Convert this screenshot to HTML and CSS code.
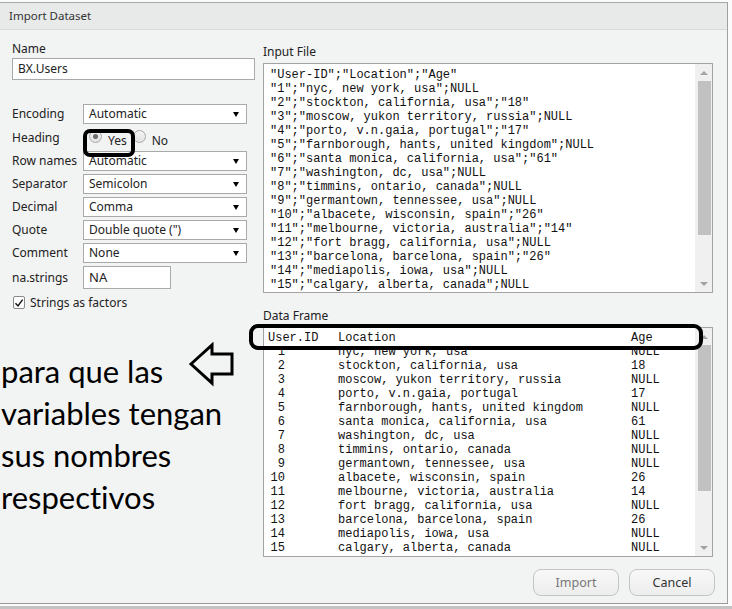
FILE: index.html
```html
<!DOCTYPE html>
<html>
<head>
<meta charset="utf-8">
<link rel="stylesheet" href="styles.css">
</head>
<body>
<div class="screen">
  <div class="dialog">
    <div class="titlebar">Import Dataset</div>
    <div class="content">
      <div class="left">
        <div class="lbl">Name</div>
        <div class="textbox name">BX.Users</div>
        <div class="form">
          <span class="rl">Encoding</span><div class="select">Automatic<i class="caret"></i></div>
          <span class="rl">Heading</span>
          <div class="radios">
            <span class="radio on"></span><span class="rtext">Yes</span>
            <span class="radio"></span><span class="rtext">No</span>
          </div>
          <span class="rl">Row names</span><div class="select">Automatic<i class="caret"></i></div>
          <span class="rl">Separator</span><div class="select">Semicolon<i class="caret"></i></div>
          <span class="rl">Decimal</span><div class="select">Comma<i class="caret"></i></div>
          <span class="rl">Quote</span><div class="select">Double quote (")<i class="caret"></i></div>
          <span class="rl">Comment</span><div class="select">None<i class="caret"></i></div>
          <span class="rl">na.strings</span><div class="textbox na">NA</div>
        </div>
        <div class="check"><span class="cbox"><svg width="10" height="10" viewBox="0 0 10 10"><path d="M1.5 5.2 L4 8 L8.6 1.6" fill="none" stroke="#111" stroke-width="1.4"/></svg></span><span>Strings as factors</span></div>
        <p class="note">para que las<br>variables tengan<br>sus nombres<br>respectivos</p>
      </div>
      <div class="right">
        <div class="lbl">Input File</div>
        <div class="box">
<pre class="pre">"User-ID";"Location";"Age"
"1";"nyc, new york, usa";NULL
"2";"stockton, california, usa";"18"
"3";"moscow, yukon territory, russia";NULL
"4";"porto, v.n.gaia, portugal";"17"
"5";"farnborough, hants, united kingdom";NULL
"6";"santa monica, california, usa";"61"
"7";"washington, dc, usa";NULL
"8";"timmins, ontario, canada";NULL
"9";"germantown, tennessee, usa";NULL
"10";"albacete, wisconsin, spain";"26"
"11";"melbourne, victoria, australia";"14"
"12";"fort bragg, california, usa";NULL
"13";"barcelona, barcelona, spain";"26"
"14";"mediapolis, iowa, usa";NULL
"15";"calgary, alberta, canada";NULL</pre>
          <div class="sb"><span class="arr up"></span><span class="thumb t1"></span><span class="track"></span><span class="arr down"></span></div>
        </div>
        <div class="lbl df-lbl">Data Frame</div>
        <div class="box">
          <div class="table">
            <div class="tr th"><span class="c1">User.ID</span><span class="c2">Location</span><span class="c3">Age</span></div>
            <div class="tr"><span class="c1"><b class="n">1</b></span><span class="c2">nyc, new york, usa</span><span class="c3">NULL</span></div>
            <div class="tr"><span class="c1"><b class="n">2</b></span><span class="c2">stockton, california, usa</span><span class="c3">18</span></div>
            <div class="tr"><span class="c1"><b class="n">3</b></span><span class="c2">moscow, yukon territory, russia</span><span class="c3">NULL</span></div>
            <div class="tr"><span class="c1"><b class="n">4</b></span><span class="c2">porto, v.n.gaia, portugal</span><span class="c3">17</span></div>
            <div class="tr"><span class="c1"><b class="n">5</b></span><span class="c2">farnborough, hants, united kingdom</span><span class="c3">NULL</span></div>
            <div class="tr"><span class="c1"><b class="n">6</b></span><span class="c2">santa monica, california, usa</span><span class="c3">61</span></div>
            <div class="tr"><span class="c1"><b class="n">7</b></span><span class="c2">washington, dc, usa</span><span class="c3">NULL</span></div>
            <div class="tr"><span class="c1"><b class="n">8</b></span><span class="c2">timmins, ontario, canada</span><span class="c3">NULL</span></div>
            <div class="tr"><span class="c1"><b class="n">9</b></span><span class="c2">germantown, tennessee, usa</span><span class="c3">NULL</span></div>
            <div class="tr"><span class="c1"><b class="n">10</b></span><span class="c2">albacete, wisconsin, spain</span><span class="c3">26</span></div>
            <div class="tr"><span class="c1"><b class="n">11</b></span><span class="c2">melbourne, victoria, australia</span><span class="c3">14</span></div>
            <div class="tr"><span class="c1"><b class="n">12</b></span><span class="c2">fort bragg, california, usa</span><span class="c3">NULL</span></div>
            <div class="tr"><span class="c1"><b class="n">13</b></span><span class="c2">barcelona, barcelona, spain</span><span class="c3">26</span></div>
            <div class="tr"><span class="c1"><b class="n">14</b></span><span class="c2">mediapolis, iowa, usa</span><span class="c3">NULL</span></div>
            <div class="tr"><span class="c1"><b class="n">15</b></span><span class="c2">calgary, alberta, canada</span><span class="c3">NULL</span></div>
          </div>
          <div class="sb"><span class="arr up"></span><span class="thumb t2"></span><span class="track"></span><span class="arr down"></span></div>
        </div>
      </div>
    </div>
    <div class="footer">
      <button class="btn disabled">Import</button>
      <button class="btn">Cancel</button>
    </div>
  </div>
  <div class="mark mark-yes"></div>
  <div class="mark mark-df"></div>
  <svg class="arrow" width="50" height="46" viewBox="0 0 50 46"><polygon points="3,22 24,3 24,12 44,12 44,32 24,32 24,41" fill="none" stroke="#000" stroke-width="3" stroke-linejoin="miter"/></svg>
</div>
</body>
</html>
```
FILE: styles.css
```css
* { box-sizing: border-box; }
html, body { margin: 0; padding: 0; }
body { width: 732px; height: 609px; overflow: hidden; background: #fbfbfb; }
.screen {
  position: relative;
  width: 732px;
  height: 609px;
  background: #fbfbfb;
  font-family: "Noto Sans", "Open Sans", sans-serif;
  font-size: 12px;
  color: #222;
}
.screen::after {
  content: "";
  position: absolute;
  left: 0; right: 0; bottom: 0; height: 5px;
  background: #c4c4c4;
}
.dialog {
  margin-top: 2px;
  width: 728px;
  height: 602px;
  background: #f2f3f3;
  border-top: 1px solid #a8a8a8;
  border-right: 1px solid #a0a0a0;
  border-bottom: 1px solid #9a9a9a;
  display: flex;
  flex-direction: column;
}
.titlebar {
  height: 27px;
  background: #e8e9e9;
  border-bottom: 1px solid #d8d9d9;
  padding-left: 9px;
  font-size: 11.5px;
  line-height: 26px;
  color: #333;
}
.content {
  display: grid;
  grid-template-columns: 243px 450px;
  column-gap: 8px;
  padding-left: 12px;
  height: 527px;
}
.left { padding-top: 11px; }
.right { padding-top: 14px; }
.lbl { height: 16px; line-height: 16px; margin-bottom: 1px; }
.right .lbl { margin-bottom: 3px; }
.right .df-lbl { margin-top: 15px; }
.textbox {
  background: #fff;
  border: 1px solid #a9a9a9;
  padding-left: 5px;
}
.textbox.name { height: 22px; line-height: 20px; }
.form {
  margin-top: 24px;
  display: grid;
  grid-template-columns: 71px 164px;
  grid-template-rows: 20px 21px 20px 20px 20px 20px 20px 23px;
  row-gap: 3px;
  align-items: center;
}
.rl { line-height: 16px; }
.select {
  height: 20px;
  background: #fff;
  border: 1px solid #a9a9a9;
  padding-left: 5px;
  line-height: 18px;
  display: flex;
  align-items: center;
  justify-content: space-between;
}
.caret {
  width: 0; height: 0;
  border-left: 3px solid transparent;
  border-right: 3px solid transparent;
  border-top: 5px solid #000;
  margin-right: 7px;
}
.textbox.na { width: 88px; height: 23px; line-height: 21px; font-size: 13px; }
.radios { display: flex; align-items: center; height: 21px; padding-left: 6px; }
.radio {
  width: 13px; height: 13px;
  border-radius: 50%;
  border: 1px solid #a8a8a8;
  background: linear-gradient(#f4f4f4, #e2e2e2);
  position: relative;
  margin-top: -3px;
}
.radio.on::after {
  content: "";
  position: absolute;
  left: 3px; top: 3px;
  width: 5px; height: 5px;
  border-radius: 50%;
  background: #6e6e6e;
}
.rtext { margin-left: 6px; margin-right: 6px; margin-top: 6px; line-height: 16px; }
.check {
  margin-top: 7px;
  display: flex;
  align-items: center;
  height: 13px;
  padding-left: 1px;
}
.cbox {
  width: 12px; height: 13px;
  border: 1px solid #8a8a8a;
  border-radius: 2px;
  background: #fff;
  margin-right: 5px;
  display: flex;
  align-items: center;
  justify-content: center;
}
.note {
  margin: 41px 0 0 -11px;
  font-family: "Lato", "Open Sans", sans-serif;
  font-size: 31px;
  line-height: 42px;
  color: #000;
  white-space: nowrap;
  font-variant-ligatures: none;
}
.box {
  height: 230px;
  background: #fff;
  border: 1px solid #a3a3a3;
  display: flex;
  overflow: hidden;
}
.pre, .table {
  flex: 1;
  margin: 0;
  font-family: "Liberation Mono", "Courier New", monospace;
  font-size: 12px;
  line-height: 14px;
  color: #111;
  overflow: hidden;
}
.pre { padding: 4px 0 0 6px; white-space: pre; }
.table { padding: 3px 0 0 4px; }
.tr { display: flex; height: 14px; white-space: pre; }
.c1 { width: 70px; flex: none; }
.c2 { width: 293px; flex: none; }
.n { display: inline-block; width: 17px; text-align: right; font-weight: normal; }
.sb {
  width: 17px;
  flex: none;
  background: #f0f0f0;
  display: flex;
  flex-direction: column;
  align-items: stretch;
}
.arr {
  height: 17px;
  flex: none;
  display: flex;
  align-items: center;
  justify-content: center;
}
.arr::before {
  content: "";
  width: 0; height: 0;
  border-left: 4px solid transparent;
  border-right: 4px solid transparent;
}
.arr.up::before { border-bottom: 4px solid #a3a3a3; }
.arr.down::before { border-top: 4px solid #a3a3a3; }
.thumb { background: #c1c1c1; margin: 0 1px 0 3px; flex: none; }
.t1 { height: 154px; }
.t2 { height: 146px; }
.track { flex: 1; }
.footer {
  display: flex;
  justify-content: flex-end;
  gap: 10px;
  padding: 12px 12px 0 0;
}
.btn {
  width: 86px;
  height: 27px;
  border: 1px solid #c4c4c4;
  border-radius: 8px;
  background: linear-gradient(#f8f8f8, #ededed);
  font-family: "Noto Sans", "Open Sans", sans-serif;
  font-size: 12.5px;
  color: #333;
  padding: 0;
}
.btn.disabled { color: #777; }
.mark {
  position: absolute;
  border: 4px solid #000;
}
.mark-yes {
  left: 83px; top: 127px;
  width: 52px; height: 28px;
  border-radius: 7px;
}
.mark-df {
  left: 249px; top: 322px;
  width: 454px; height: 26px;
  border-radius: 9px;
}
.arrow {
  position: absolute;
  left: 188px; top: 340px;
}
```
